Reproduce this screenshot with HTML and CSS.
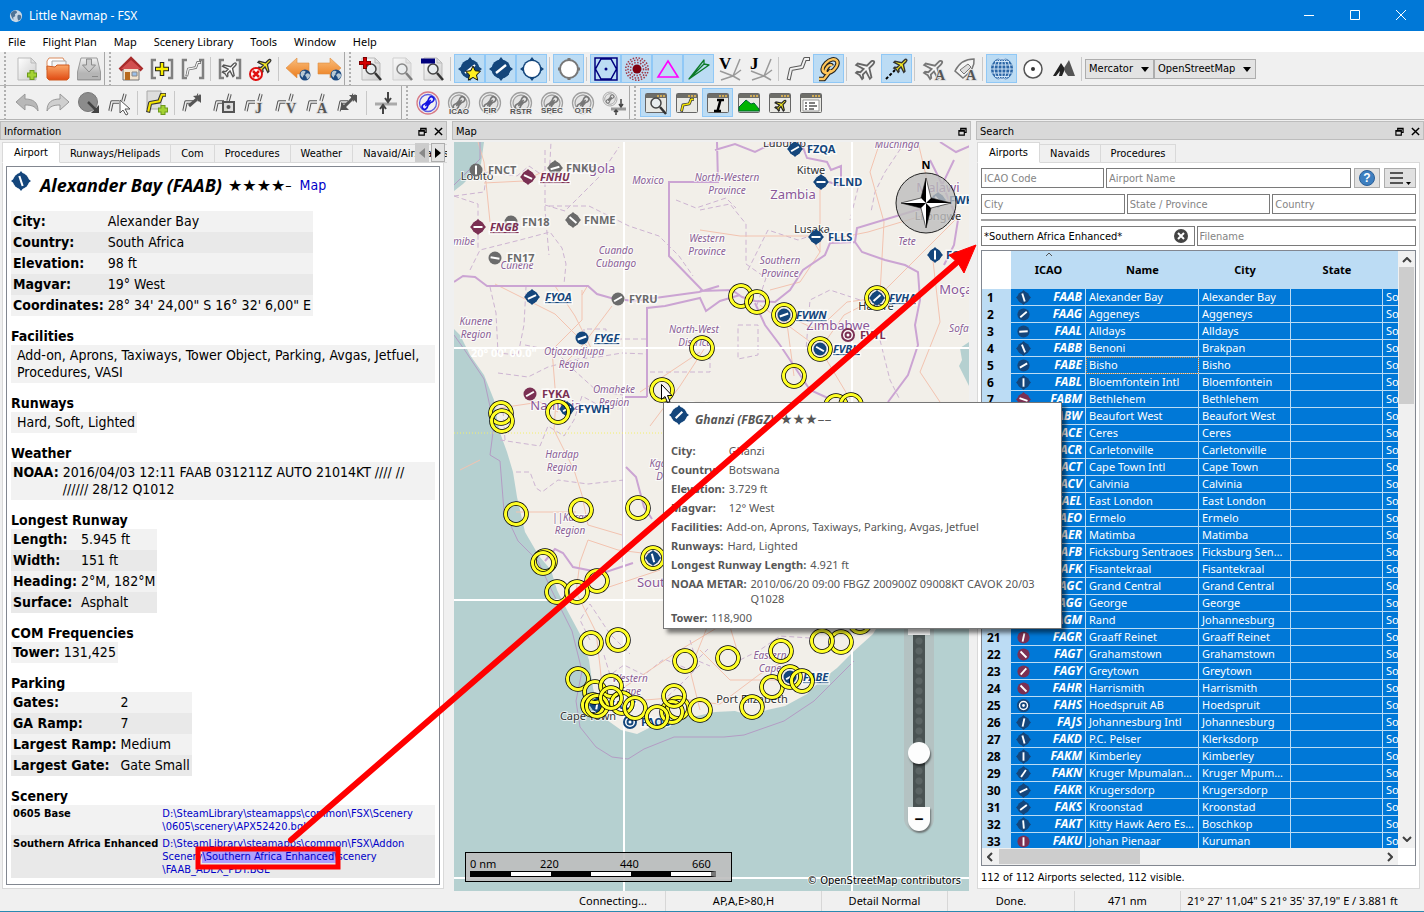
FILE: index.html
```html
<!DOCTYPE html>
<html lang="en">
<head>
    <meta charset="UTF-8">
    <meta name="viewport" content="width=device-width, initial-scale=1.0">
    <title>Little Navmap - FSX</title>
    <link rel="stylesheet" href="styles.css">
</head>
<body>
    <!-- Icon library -->
    <svg class="icon-defs" width="0" height="0" aria-hidden="true">
        <defs>
            <linearGradient id="gPaper" x1="0" y1="0" x2="1" y2="1"><stop offset="0" stop-color="#fff"/><stop offset="1" stop-color="#ccc"/></linearGradient>
            <linearGradient id="gOrange" x1="0" y1="0" x2="0" y2="1"><stop offset="0" stop-color="#f9bd7c"/><stop offset="1" stop-color="#ec7d1c"/></linearGradient>
            <linearGradient id="gFolder" x1="0" y1="0" x2="0" y2="1"><stop offset="0" stop-color="#fba868"/><stop offset="1" stop-color="#e04a12"/></linearGradient>
            <linearGradient id="gDisk" x1="0" y1="0" x2="0" y2="1"><stop offset="0" stop-color="#f2f2f2"/><stop offset="1" stop-color="#9a9a9a"/></linearGradient>
            <path id="planePath" d="M12 1c1.200 0 1.700 1.500 1.700 3v5l8 5v2.200l-8-2.500v4.500l2.600 2v1.600L12 20.800l-4.300 1v-1.600l2.600-2v-4.500l-8 2.500V14l8-5V4c0-1.500.5-3 1.700-3z"/>
            <path id="routePath" d="M3 21l2-9 11-2 3-8h3"/>
            <symbol id="route" viewBox="0 0 24 24"><g fill="none" stroke-linejoin="round" stroke-linecap="square"><use href="#routePath" stroke="#5a5a5a" stroke-width="4"/><use href="#routePath" stroke="#f2f2f2" stroke-width="2"/></g></symbol>
            <symbol id="routeYellow" viewBox="0 0 24 24"><g fill="none" stroke-linejoin="round" stroke-linecap="square"><use href="#routePath" stroke="#333" stroke-width="5"/><use href="#routePath" stroke="#f5e400" stroke-width="2.500"/></g></symbol>
            <symbol id="routeSmall" viewBox="0 0 24 24"><g fill="none" stroke-linejoin="round"><path d="M2 20l2-9h7M15 10l2-7" stroke="#555" stroke-width="3.500"/><path d="M2 20l2-9h7M15 10l2-7" stroke="#eee" stroke-width="1.500"/></g></symbol>
            <symbol id="brackets" viewBox="0 0 24 24"><path d="M6 3H2v18h4M18 3h4v18h-4" fill="none" stroke="#808080" stroke-width="2.500"/></symbol>
            <symbol id="magnifier" viewBox="0 0 24 24"><circle cx="12" cy="12" r="5" fill="#e8eef0" fill-opacity=".8" stroke="#444" stroke-width="1.500"/><path d="M16 16l6 7" stroke="#333" stroke-width="2.500"/></symbol>
            <symbol id="page" viewBox="0 0 24 24"><path d="M3 1h13l5 5v17H3z" fill="url(#gPaper)" stroke="#bbb"/><path d="M16 1l5 5h-5z" fill="#e0e0e0" stroke="#bbb"/></symbol>
            <symbol id="globe" viewBox="0 0 24 24"><circle cx="12" cy="12" r="11" fill="#1d4a80"/><path d="M4 6c4-4 8-3 9-1s-3 3-2 5-4 3-3 6-4-1-5-4zM14 10c3-3 7-1 8 2s-3 7-5 8-1-4-3-5-2-3 0-5z" fill="#b7c8d4"/></symbol>
            <symbol id="apt" viewBox="0 0 24 24"><circle cx="12" cy="12" r="9.500" fill="#14467c"/><path d="M12 0l3 4H9zM12 24l3-4H9zM0 12l4-3v6zM24 12l-4-3v6z" fill="#14467c"/></symbol>
            <g id="dumbbell" transform="rotate(-48 12 12)"><path d="M7 9.500c2 0 2.500 1 3.500 1h3c1 0 1.500-1 3.500-1a2.500 2.500 0 0 1 0 5c-2 0-2.500-1-3.500-1h-3c-1 0-1.500 1-3.500 1a2.500 2.500 0 0 1 0-5zM8 12h8" stroke-width="1.600"/></g>
            <symbol id="orbit" viewBox="0 0 24 24"><circle cx="12" cy="12" r="10.500" fill="none" stroke="#a0a0a0" stroke-width="1.300"/><circle cx="12" cy="12" r="8" fill="#e4e4e4" stroke="#a0a0a0" stroke-width="1.300"/><use href="#dumbbell" fill="#e4e4e4" stroke="#777"/></symbol>
            <symbol id="win" viewBox="0 0 24 24"><rect x="1.500" y="2.500" width="21" height="19" rx="1" fill="#e9e9e4" stroke="#666"/><path d="M2 3h20v4H2z" fill="#6d6d68"/><path d="M13 5h2M16 5h2M19 5h2" stroke="#f0c050" stroke-width="1.500"/></symbol>
            <symbol id="restore" viewBox="0 0 10 10"><path d="M3 4V1.500h6V6H7M1 4h6v5H1zM1 4.700h6M3 2h6" fill="none" stroke="#000" stroke-width="1.300"/></symbol>
            <symbol id="cross" viewBox="0 0 10 10"><path d="M1 1l8 8M9 1L1 9" stroke="#000" stroke-width="1.600"/></symbol>
            <g id="ring" fill="none"><circle r="10.500" stroke="#000" stroke-width="4.500"/><circle r="10.500" stroke="#ffff26" stroke-width="3"/></g>
            <symbol id="compassRose" viewBox="0 0 64 64">
                <circle cx="32" cy="32" r="30" fill="#bdbdbd" fill-opacity=".8" stroke="#222"/>
                <path d="M32 7l5 20 20 5-20 5-5 20-5-20-20-5 20-5z" fill="#fff" stroke="#000" stroke-width=".6"/>
                <path d="M32 7v25l-5-5zM57 32H32l5-5zM32 57V32l5 5zM7 32h25l-5 5z" fill="#000"/>
            </symbol>
        </defs>
    </svg>

    <header class="title-bar">
        <svg class="app-icon" viewBox="0 0 16 16"><circle cx="8" cy="8" r="7" fill="#c9d8e6"/><path d="M2 5c3-4 6-4 7-2s-3 2-2 4-3 1-2 4-3-2-3-6zM10 7c2-1 4 0 4 2s-2 4-3 4-2-5-1-6z" fill="#4e7396"/></svg>
        <h1>Little Navmap - FSX</h1>
        <div class="window-buttons">
            <button aria-label="Minimize"><svg viewBox="0 0 10 10"><path d="M0 5.500h10" stroke="#fff"/></svg></button>
            <button aria-label="Maximize"><svg viewBox="0 0 10 10"><path d="M.5.5h9v9h-9z" fill="none" stroke="#fff"/></svg></button>
            <button aria-label="Close"><svg viewBox="0 0 10 10"><path d="M0 0l10 10M10 0L0 10" stroke="#fff"/></svg></button>
        </div>
    </header>

    <nav class="menu-bar">
        <button>File</button>
        <button>Flight Plan</button>
        <button>Map</button>
        <button>Scenery Library</button>
        <button>Tools</button>
        <button>Window</button>
        <button>Help</button>
    </nav>

    <div class="toolbar">
        <span class="handle"></span>
        <button aria-label="New"><svg viewBox="0 0 24 24"><use href="#page"/><path d="M17 13v10M12 18h10" stroke="#6c9a1d" stroke-width="5"/><path d="M17 14v8M13 18h8" stroke="#a4d233" stroke-width="3"/></svg></button>
        <button aria-label="Open"><svg viewBox="0 0 24 24"><path d="M3 1h14l2 4v8H1V4z" fill="#fff" stroke="#d98a5c"/><path d="M6 4h14v8H6z" fill="#f5f5f5" stroke="#aaa"/><path d="M1 9l8 1 2-2h12v13l-2 2H3l-2-2z" fill="url(#gFolder)" stroke="#d05a20"/></svg></button>
        <button aria-label="Save"><svg viewBox="0 0 24 24"><path d="M4 1h16l3.500 14v8H.5v-8z" fill="url(#gDisk)" stroke="#999"/><path d="M1 16h22v6H1z" fill="#b5b5b5"/><path d="M9.500 2h5v6h4L12 15 5.500 8h4z" fill="#ccc" stroke="#8a8a8a"/><path d="M15 19.500h6" stroke="#888"/></svg></button>
        <span class="handle edge"></span>
        <button aria-label="Home"><svg viewBox="0 0 24 24"><path d="M4 11h16v12H4z" fill="#f1e4cf" stroke="#777"/><path d="M1 13L12 2l11 11" fill="none" stroke="#a82b2b" stroke-width="4"/><path d="M2 12L12 3l10 9z" fill="#d25050"/><path d="M6 15h5v8H6z" fill="#b86a1d"/><path d="M13 15h5v4h-5z" fill="#9cc0e8" stroke="#888"/></svg></button>
        <button aria-label="Center airport"><svg viewBox="0 0 24 24"><use href="#brackets"/><path d="M12 5v14M5 12h14" stroke="#222" stroke-width="4.500"/><path d="M12 6v12M6 12h12" stroke="#f8ee00" stroke-width="2.500"/></svg></button>
        <button aria-label="Center flight plan"><svg viewBox="0 0 24 24"><use href="#brackets"/><use href="#route" x="4" y="4" width="16" height="16"/></svg></button>
        <span class="separator"></span>
        <button aria-label="Center aircraft"><svg viewBox="0 0 24 24"><use href="#brackets"/><use href="#planePath" transform="rotate(45 12 12) translate(3 3) scale(.76)" fill="#fff" stroke="#555" stroke-width="1.800"/></svg></button>
        <button aria-label="Delete trail"><svg viewBox="0 0 24 24"><use href="#planePath" transform="translate(16 -4) rotate(45) scale(.72)" fill="#f5ea20" stroke="#333" stroke-width="1.800"/><circle cx="7" cy="17" r="6" fill="#fff" stroke="#e01010" stroke-width="2"/><path d="M4 14l6 6M10 14l-6 6" stroke="#e01010" stroke-width="2.500"/></svg></button>
        <span class="separator"></span>
        <button aria-label="Back"><svg viewBox="0 0 24 24"><path d="M0 11L11 1v5h12v11H11v4z" fill="url(#gOrange)" stroke="#dd8d42" stroke-width=".6"/><use href="#globe" x="13" y="12" width="12" height="12"/></svg></button>
        <button aria-label="Forward"><svg viewBox="0 0 24 24"><path d="M24 11L13 1v5H1v11h12v4z" fill="url(#gOrange)" stroke="#dd8d42" stroke-width=".6"/><use href="#globe" x="13" y="12" width="12" height="12"/></svg></button>
        <span class="handle edge"></span>
        <button aria-label="Increase detail"><svg viewBox="0 0 24 24"><use href="#page"/><use href="#magnifier"/><path d="M6 0v12M0 6h12" stroke="#700" stroke-width="4"/><path d="M6 1v10M1 6h10" stroke="#d40000" stroke-width="2.500"/></svg></button>
        <button aria-label="Default detail"><svg viewBox="0 0 24 24" class="faded"><use href="#page"/><use href="#magnifier"/></svg></button>
        <button aria-label="Decrease detail"><svg viewBox="0 0 24 24"><use href="#page"/><use href="#magnifier"/><path d="M0 4h14" stroke="#00007c" stroke-width="5"/></svg></button>
        <span class="separator"></span>
        <button class="checked" aria-label="Add-on airports"><svg viewBox="0 0 24 24"><use href="#apt"/><path d="M7 16L17 8" stroke="#fff" stroke-width="2"/><path d="M15 9l2.200 4.800 5.300.5-4 3.600 1.200 5.300-4.700-2.800-4.700 2.800 1.200-5.300-4-3.600 5.300-.5z" fill="#ffee20" stroke="#111"/></svg></button>
        <button class="checked" aria-label="Hard runways"><svg viewBox="0 0 24 24"><use href="#apt"/><path d="M7 16L17 8" stroke="#fff" stroke-width="2.500"/></svg></button>
        <button class="checked" aria-label="Soft runways"><svg viewBox="0 0 24 24"><use href="#apt"/><circle cx="12" cy="12" r="8" fill="#fff"/></svg></button>
        <span class="separator"></span>
        <button class="checked" aria-label="Empty airports"><svg viewBox="0 0 24 24"><path d="M12 1v22M1 12h22" stroke="#777" stroke-width="3"/><circle cx="12" cy="12" r="9" fill="#fff" stroke="#777" stroke-width="2"/></svg></button>
        <span class="separator"></span>
        <button class="checked" aria-label="VOR"><svg viewBox="0 0 24 24"><path d="M1 1h22v22H1zM7 2h10l5.500 10L17 22H7L1.500 12z" fill="none" stroke="#00007f" stroke-width="1.500"/><circle cx="12" cy="12" r="1.500" fill="#00007f"/></svg></button>
        <button class="checked" aria-label="NDB"><svg viewBox="0 0 24 24"><circle cx="12" cy="12" r="4.500" fill="#800010"/><g fill="none" stroke="#a03848" stroke-width="1.500" stroke-dasharray="1.500 1.500"><circle cx="12" cy="12" r="6.500"/><circle cx="12" cy="12" r="9"/><circle cx="12" cy="12" r="11.200"/></g></svg></button>
        <button class="checked" aria-label="Waypoints"><svg viewBox="0 0 24 24"><path d="M12 4l10 16H2z" fill="none" stroke="#f0f" stroke-width="1.600"/></svg></button>
        <button class="checked" aria-label="ILS"><svg viewBox="0 0 24 24"><path d="M2 22L17 3v4l5 1zL17 7" fill="none" stroke="#0c7a28" stroke-width="1.300" stroke-linejoin="round"/></svg></button>
        <button aria-label="Victor airways"><svg viewBox="0 0 24 24"><path d="M2 14l13 5M3 23l12-4M15 19L22 2M15 19l8-6M15 19l7 4" stroke="#999" stroke-width="1.500" fill="none"/><text x="1" y="12" class="glyph-serif">V</text></svg></button>
        <button aria-label="Jet airways"><svg viewBox="0 0 24 24"><path d="M2 14l13 5M3 23l12-4M15 19L22 2M15 19l8-6M15 19l7 4" stroke="#999" stroke-width="1.500" fill="none"/><text x="1" y="12" class="glyph-serif">J</text></svg></button>
        <span class="separator"></span>
        <button aria-label="Show flight plan"><svg viewBox="0 0 24 24"><use href="#route"/></svg></button>
        <button class="checked" aria-label="Show missed approach"><svg viewBox="0 0 24 24"><g fill="none" stroke-linejoin="round"><path d="M2 22h5l7-9M9 16c-5-1-4-6 0-10s9-5 11-2-2 9-6 11-7 1-5-3 5-5 6-3" stroke="#222" stroke-width="4.500"/><path d="M2 22h5l7-9M9 16c-5-1-4-6 0-10s9-5 11-2-2 9-6 11-7 1-5-3 5-5 6-3" stroke="#ffc65a" stroke-width="2.300"/></g></svg></button>
        <span class="separator"></span>
        <button aria-label="Show aircraft"><svg viewBox="0 0 24 24"><use href="#planePath" transform="rotate(45 12 12)" fill="#f4f4f4" stroke="#666" stroke-width="1.800"/></svg></button>
        <button class="checked" aria-label="Show trail"><svg viewBox="0 0 24 24"><use href="#planePath" transform="translate(16 -4) rotate(45) scale(.72)" fill="#f5ea20" stroke="#333" stroke-width="2"/><path d="M1 22l9-9" stroke="#000" stroke-width="2" stroke-dasharray="3 2"/></svg></button>
        <span class="separator"></span>
        <button aria-label="AI aircraft"><svg viewBox="0 0 24 24"><use href="#planePath" transform="rotate(45 12 12)" fill="#f4f4f4" stroke="#777" stroke-width="1.800"/><text x="13" y="23" class="glyph-letter">A</text></svg></button>
        <button aria-label="AI ships"><svg viewBox="0 0 24 24"><path d="M2 14c4-8 11-12 19-12 1 8-4 14-11 19z" fill="#f4f4f4" stroke="#777" stroke-width="1.500"/><path d="M7 13l4 4 7-7-3-3z" fill="#ddd" stroke="#777"/><text x="13" y="23" class="glyph-letter">A</text></svg></button>
        <span class="separator"></span>
        <button class="checked" aria-label="Grid"><svg viewBox="0 0 24 24"><circle cx="12" cy="12" r="11" fill="#2c66a6"/><g fill="none" stroke="#cfe4f7"><ellipse cx="12" cy="12" rx="4" ry="11"/><ellipse cx="12" cy="12" rx="8" ry="11"/><path d="M12 1v22M1 12h22M2 8h20M2 16h20M5 4.500h14M5 19.500h14"/></g></svg></button>
        <button aria-label="Cities"><svg viewBox="0 0 24 24"><circle cx="12" cy="12" r="9" fill="#fff" stroke="#555" stroke-width="1.500"/><circle cx="12" cy="12" r="2" fill="#333"/></svg></button>
        <button aria-label="Hillshading"><svg viewBox="0 0 24 24"><path d="M1 19L9 6l4 6-3 7h-3l1-5-4 5z" fill="#222"/><path d="M12 11l5-8 6 16h-7l-3-4z" fill="#555"/></svg></button>
        <span class="separator"></span>
        <label class="combo projection"><select aria-label="Projection"><option>Mercator</option><option>Spherical</option></select></label>
        <label class="combo theme"><select aria-label="Map theme"><option>OpenStreetMap</option><option>OpenTopoMap</option></select></label>
    </div>

    <div class="toolbar">
        <span class="handle"></span>
        <button aria-label="Undo"><svg viewBox="0 0 24 24"><path d="M1 11l9-8v5c8 0 13 3 13 12-3-5-7-6-13-6v5z" fill="#b8b8b8" stroke="#999"/></svg></button>
        <button aria-label="Redo"><svg viewBox="0 0 24 24"><path d="M23 11l-9-8v5C6 8 1 11 1 20c3-5 7-6 13-6v5z" fill="#cfcfcf" stroke="#999"/></svg></button>
        <button aria-label="Select"><svg viewBox="0 0 24 24"><circle cx="11" cy="11" r="9.500" fill="#8c8c8c" stroke="#777"/><path d="M11 11l9 9" stroke="#444" stroke-width="2.500"/><path d="M22 22v-8l-8 8z" fill="#444"/></svg></button>
        <button aria-label="Edit on map"><svg viewBox="0 0 24 24"><use href="#routeSmall"/><path d="M12 9l10 9h-5l3 5-2 1-3-5-3 3z" fill="#fff" stroke="#555"/></svg></button>
        <span class="separator"></span>
        <button aria-label="Procedures"><svg viewBox="0 0 24 24"><path d="M2 0h14v18H2z" fill="#ddd" stroke="#aaa"/><use href="#routeYellow" x="1" y="2" width="20" height="20"/><path d="M18 14v10M13 19h10" stroke="#6c9a1d" stroke-width="5"/><path d="M18 15v8M14 19h8" stroke="#a4d233" stroke-width="3"/></svg></button>
        <span class="separator"></span>
        <button aria-label="Direct"><svg viewBox="0 0 24 24"><use href="#routeSmall"/><path d="M7 15l8-7" stroke="#555" stroke-width="3"/><path d="M19 4v8l-8-7z" fill="#555"/></svg></button>
        <button aria-label="Radionav"><svg viewBox="0 0 24 24"><use href="#routeSmall"/><path d="M10 11h11v10H10z" fill="#ddd" stroke="#555" stroke-width="2"/><circle cx="15.500" cy="16" r="2" fill="#555"/></svg></button>
        <button aria-label="High altitude"><svg viewBox="0 0 24 24"><use href="#routeSmall"/><text x="11" y="22" class="glyph-letter">J</text></svg></button>
        <button aria-label="Low altitude"><svg viewBox="0 0 24 24"><use href="#routeSmall"/><text x="11" y="22" class="glyph-letter">V</text></svg></button>
        <button aria-label="By altitude"><svg viewBox="0 0 24 24"><use href="#routeSmall"/><text x="11" y="22" class="glyph-letter">A</text></svg></button>
        <button aria-label="Reverse"><svg viewBox="0 0 24 24"><use href="#routeSmall"/><path d="M7 16l9-9" stroke="#555" stroke-width="3"/><path d="M20 4v8l-8-8zM4 19v-8l8 8z" fill="#555"/></svg></button>
        <span class="separator"></span>
        <button aria-label="Adjust altitude"><svg viewBox="0 0 24 24"><path d="M1 13h22" stroke="#aaa" stroke-width="3"/><path d="M14 1v9M11 7l3 4 3-4M9 23v-8M6 18l3-4 3 4" fill="none" stroke="#444" stroke-width="2"/></svg></button>
        <span class="handle edge"></span>
        <button aria-label="Airspaces"><svg viewBox="0 0 24 24"><circle cx="12" cy="12" r="11" fill="none" stroke="#d77a86" stroke-width="1.300"/><circle cx="12" cy="12" r="8.500" fill="none" stroke="#5b5be0" stroke-width="1.300"/><use href="#dumbbell" fill="#e8e8ff" stroke="#1414e0"/></svg></button>
        <button aria-label="ICAO airspaces"><svg viewBox="0 0 24 24"><use href="#orbit"/><text x="12" y="23" class="glyph-tag">ICAO</text></svg></button>
        <button aria-label="FIR airspaces"><svg viewBox="0 0 24 24"><use href="#orbit"/><text x="12" y="22" class="glyph-tag">FIR</text></svg></button>
        <button aria-label="Restricted airspaces"><svg viewBox="0 0 24 24"><use href="#orbit"/><text x="12" y="23" class="glyph-tag">RSTR</text></svg></button>
        <button aria-label="Special airspaces"><svg viewBox="0 0 24 24"><use href="#orbit"/><text x="12" y="22" class="glyph-tag">SPEC</text></svg></button>
        <button aria-label="Other airspaces"><svg viewBox="0 0 24 24"><use href="#orbit"/><text x="12" y="22" class="glyph-tag">OTR</text></svg></button>
        <button aria-label="Airspace altitude"><svg viewBox="0 0 24 24"><use href="#orbit" width="16" height="16"/><path d="M9 18h15" stroke="#999" stroke-width="3"/><path d="M19 8v8M17 13l2 3 2-3M14 24v-5M12 21l2-2 2 2" fill="none" stroke="#444" stroke-width="1.500"/></svg></button>
        <span class="handle edge"></span>
        <button class="checked" aria-label="Search window"><svg viewBox="0 0 24 24"><use href="#win"/><use href="#magnifier"/></svg></button>
        <button aria-label="Flight plan window"><svg viewBox="0 0 24 24"><use href="#win"/><use href="#routeYellow" x="5" y="7" width="14" height="14"/></svg></button>
        <button class="checked" aria-label="Information window"><svg viewBox="0 0 24 24"><use href="#win"/><path d="M11 9h7M8 20h7M14.500 9l-3 11" stroke="#000" stroke-width="2.500"/></svg></button>
        <button aria-label="Elevation profile window"><svg viewBox="0 0 24 24"><use href="#win"/><path d="M2 20v-4l7-7 5 4 3-1 5 6v2z" fill="#00b400" stroke="#063"/></svg></button>
        <button aria-label="Aircraft window"><svg viewBox="0 0 24 24"><use href="#win"/><use href="#planePath" transform="translate(13 4) rotate(45) scale(.6)" fill="#f5ea20" stroke="#222" stroke-width="2"/></svg></button>
        <button aria-label="Legend window"><svg viewBox="0 0 24 24"><use href="#win"/><path d="M4 9h16v11H4z" fill="#fff" stroke="#999"/><path d="M6 12h2M6 15h2M6 18h2M10 12h6M10 15h8M10 18h5" stroke="#555" stroke-width="1.500"/></svg></button>
    </div>

    <main class="docks">
        <section class="dock">
            <div class="dock-title">
                <h2>Information</h2>
                <button aria-label="Float"><svg><use href="#restore"/></svg></button>
                <button aria-label="Close"><svg><use href="#cross"/></svg></button>
            </div>
            <div class="tabs info-tabs">
                <button class="active">Airport</button>
                <button>Runways/Helipads</button>
                <button>Com</button>
                <button>Procedures</button>
                <button>Weather</button>
                <button>Navaid/Airspaces</button>
                <div class="tab-scroll">
                    <button class="off" aria-label="Scroll left"><svg viewBox="0 0 6 10"><path d="M6 0v10L0 5z"/></svg></button>
                    <button aria-label="Scroll right"><svg viewBox="0 0 6 10"><path d="M0 0v10l6-5z"/></svg></button>
                </div>
            </div>
            <div class="pane info-pane">
                <article class="info-text">
                    <div class="info-head">
                        <svg class="info-icon" viewBox="0 0 24 24"><use href="#apt"/><path d="M10 6l4 12" stroke="#fff" stroke-width="2.500"/></svg>
                        <h3>Alexander Bay (FAAB)</h3>
                        <span class="stars">★★★★</span><span class="dash">–</span>
                        <a href="#map">Map</a>
                    </div>
                    <table class="facts">
                        <tr><th>City:</th><td>Alexander Bay</td></tr>
                        <tr><th>Country:</th><td>South Africa</td></tr>
                        <tr><th>Elevation:</th><td>98 ft</td></tr>
                        <tr><th>Magvar:</th><td>19° West</td></tr>
                        <tr><th>Coordinates:</th><td>28° 34' 24,00" S 16° 32' 6,00" E</td></tr>
                    </table>
                    <h4>Facilities</h4>
                    <table class="facts wide indent">
                        <tr><td>Add-on, Aprons, Taxiways, Tower Object, Parking, Avgas, Jetfuel, Procedures, VASI</td></tr>
                    </table>
                    <h4>Runways</h4>
                    <table class="facts indent">
                        <tr><td>Hard, Soft, Lighted</td></tr>
                    </table>
                    <h4>Weather</h4>
                    <table class="facts wide">
                        <tr><th>NOAA:</th><td>2016/04/03 12:11 FAAB 031211Z AUTO 21014KT //// //<br>////// 28/12 Q1012</td></tr>
                    </table>
                    <h4>Longest Runway</h4>
                    <table class="facts">
                        <tr><th>Length:</th><td>5.945 ft</td></tr>
                        <tr><th>Width:</th><td>151 ft</td></tr>
                        <tr><th>Heading:</th><td>2°M, 182°M</td></tr>
                        <tr><th>Surface:</th><td>Asphalt</td></tr>
                    </table>
                    <h4>COM Frequencies</h4>
                    <table class="facts">
                        <tr><th>Tower:</th><td>131,425</td></tr>
                    </table>
                    <h4>Parking</h4>
                    <table class="facts">
                        <tr><th>Gates:</th><td>2</td></tr>
                        <tr><th>GA Ramp:</th><td>7</td></tr>
                        <tr><th>Largest Ramp:</th><td>Medium</td></tr>
                        <tr><th>Largest Gate:</th><td>Gate Small</td></tr>
                    </table>
                    <h4>Scenery</h4>
                    <table class="facts wide scenery">
                        <tr><th>0605 Base</th><td><a href="#base">D:\SteamLibrary\steamapps\common\FSX\Scenery<br>\0605\scenery\APX52420.bgl</a></td></tr>
                        <tr><th>Southern Africa Enhanced</th><td><a href="#addon">D:\SteamLibrary\steamapps\common\FSX\Addon<br>Scenery<mark>\Southern Africa Enhanced\</mark>scenery<br>\FAAB_ADEX_PDT.BGL</a></td></tr>
                    </table>
                </article>
            </div>
        </section>

        <section class="dock map-dock">
            <div class="dock-title">
                <h2>Map</h2>
                <button aria-label="Float"><svg><use href="#restore"/></svg></button>
            </div>
            <div class="map">
                <svg class="map-canvas">
                    <g transform="translate(-454 -142)">
                        <rect class="land" x="0" y="0" width="3000" height="3000"/>
                        <path class="sea" d="M0 0H484V142l-3 22-10 12-8 8-9 7-4 134 10 10 10 20 14 20 10 25 5 30 8 22 6 20 4 25 8 35 14 24 12 14 6 20 10 20 14 26 8 24 4 28 4 16 10 16 14 10 16 4 12-6 12-14 16 2 20 0 18-4 20-1 16 5 16-6 18-4 22-12 12-12 18-14 16-16 20-18 30-50 40-55 60-60H3000V3000H0z"/>
                        <path class="sea" d="M969 342l-9 6 2 12-3 6 6 12 4 8h20v-44z"/>
                        <g class="region">
                            <path d="M454 196l30-4 3-20 30 4 12-10 20 14 2-38M545 150v60l4 45M545 205l20 6 14-14 20-20 20-30M549 206l40 0 20 10 20 10 30 10 20 20 14 20M470 270l10-20 40-10 30-8 12 16 4 16-2 20M490 287l6 26 2 40 20 2 6-30 2-38M454 196l24 8 0 46M525 345l30 6 20 20 22 20 26 4M498 373l30 4 20-10 30-8 20-2 24-4 25 1M584 342v-13h22v10h40M650 372h60v-20M676 200l20 8 30-10 10 10M700 210l30-6 16 20 0 40 20 14-10 30M748 270l20-40 30 10 30-10M860 180l-10 40M905 142l-20 30-10 20-4 20M860 300l-30-10-20 10-4 50M880 340l10 40 10 20M738 325h20v30l-20 4z"/>
                            <path d="M500 440l40 6 8-20 16 10 10-16 8-24 18 10 26-4M516 472h14l6 16 6 4 16-12 30 4 36-4M505 440l-2-30M590 640l-10-20 10-16 20 30 20 20M604 655l6 20 14-10 20 10 20-16 24 10 20-20M690 640l6 20 14 6M700 665l-20 20-26 24M740 660l20-10 20-14 30 2 12-10"/>
                        </g>
                        <g class="road">
                            <path d="M478 142l6 20 2 20 4 40M484 183l40-2 20-10M555 286l20 30 18 36-38-38-60-30M582 290v30l-30 30 4 50-2 30 20 40 8 25 6 30 34 10M588 285l-6 10M612 306l-30 40-20 20M500 408l40-6 18 10M516 512h60M588 540l-8 22-4 30 20 40 4 34 4 40M588 540l30 10 32 4M600 590l60-20M710 340l-30 46-30 40M480 460l-20 10"/>
                            <path d="M700 230l40 6 70 0 10 16 0-70M820 252l-20 30-30 8M828 240l40-8 60-18 0-30-10-42M877 298l-30 4-30 28-34-16M877 298l40-40 40-40M820 349l30 50M820 349l24-34 33-17M820 349l-60-44M794 376l-4-30-4-30M700 352l-60 40M940 402l-20-30 20-50-8-70M700 710l-10-40 20-50M680 700l40 4 40-30 30-16M740 660l-12-40M620 702l50-4 40 4M620 690l60-40 50-30M700 650l30 30 60 0M880 142l-10 30 14 50-4 72"/>
                        </g>
                        <g class="border">
                            <path d="M454 282l9-6 12 1 12 9h101l9 8 14 4 22 3 66-9 20-6M717 142l1 40h-49v74l34 35M647 397V308l18-2 35-8 6 13 14-10 20-6M700 291l32-1 10 7 13 4 20 1 15-12 13-20 22-15 5-12 25-1 7 10 23 8 20 5 13 7 2 28-5 25 3 20-10 30-20 27M755 303l10 22 15 20 10 15 10 15 10 15 20 9M647 397h-23M715 150l20-6 20 8 20-10 26 0 6 16 20 4 4 8 10-4v20l-12-4M855 242l2-14 53-16 22-6 22-46M930 160l10 20 18 40-4 25-10 20M940 142l16 10 14-6"/>
                            <path d="M626 467l10 10 8 30 8 12M545 561l10-12 8 4 10 14 30 6 30-10"/>
                            <path class="thin" d="M623 397v165M454 185l26-26V142M454 335l10 14 20 30 10 46-4 30 10 6 4 50 14 30 20 20 14 30 20 40 10 40-6 30 4 26 16 20 16 10 16 2 16-10 30-12 50 0 20-2 40-14 30-20 40-40"/>
                        </g>
                        <path class="graticule" d="M624 142V3000M852 142V3000M454 348H3000M454 600H3000M454 878H3000"/>
                        <path class="tropic" d="M454 433H3000"/>
                        <text class="grat-label" x="471" y="357">20° 00' 00.0"</text>
                        <g class="lbl-region">
                            <text x="648" y="184">Moxico</text>
                            <text x="727" y="181">North-Western</text><text x="727" y="194">Province</text>
                            <text x="707" y="242">Western</text><text x="707" y="255">Province</text>
                            <text x="616" y="254">Cuando</text><text x="616" y="267">Cubango</text>
                            <text x="517" y="269">Cunene</text>
                            <text x="464" y="245">mibe</text>
                            <text x="476" y="325">Kunene</text><text x="476" y="338">Region</text>
                            <text x="574" y="355">Otjozondjupa</text><text x="574" y="368">Region</text>
                            <text x="614" y="393">Omaheke</text><text x="614" y="406">Region</text>
                            <text x="694" y="333">North-West</text><text x="694" y="346">District</text>
                            <text x="780" y="264">Southern</text><text x="780" y="277">Province</text>
                            <text x="897" y="148">Muchinga</text>
                            <text x="907" y="245">Tete</text>
                            <text x="963" y="332">Sofala</text>
                            <text x="562" y="458">Hardap</text><text x="562" y="471">Region</text>
                            <text x="570" y="521">||Karas</text><text x="570" y="534">Region</text>
                            <text x="672" y="467">Kgalagadi</text><text x="672" y="480">District</text>
                            <text x="630" y="682">Western</text><text x="630" y="695">Cape</text>
                            <text x="770" y="659">Eastern</text><text x="770" y="672">Cape</text>
                        </g>
                        <g class="lbl-country">
                            <text x="594" y="173">Angola</text>
                            <text x="793" y="199">Zambia</text>
                            <text x="838" y="330">Zimbabwe</text>
                            <text x="938" y="192">Malawi</text>
                            <text x="962" y="294">Moçam</text>
                            <text x="556" y="410">Namibia</text>
                            <text x="718" y="411">Botswana</text>
                            <text x="674" y="587">South Africa</text>
                        </g>
                        <g class="lbl-city">
                            <text x="477" y="180">Lobito</text>
                            <text x="786" y="147">Lubumb.</text>
                            <text x="811" y="174">Kitwe</text>
                            <text x="812" y="233">Lusaka</text>
                            <text x="938" y="220">Lilongwe</text>
                            <text x="876" y="310">Harare</text>
                            <text x="588" y="720">Cape Town</text>
                            <text x="752" y="703">Port Elizabeth</text>
                        </g>
                        <g id="mapAirports"></g>
                        <g id="mapRings"></g>
                        <text class="attribution" x="884" y="884">© OpenStreetMap contributors</text>
                    </g>
                </svg>
                <div class="compass">
                    <span>N</span>
                    <svg viewBox="0 0 64 64"><use href="#compassRose"/></svg>
                </div>
                <div class="zoom-bar">
                    <button class="zoom-in" aria-label="Zoom in">+</button>
                    <input type="range" min="0" max="100" value="29" aria-label="Zoom">
                    <button class="zoom-out" aria-label="Zoom out">−</button>
                </div>
                <div class="scale">
                    <div class="scale-labels"><span>0 nm</span><span>220</span><span>440</span><span>660</span></div>
                    <div class="scale-line"><i></i><i></i><i></i><i></i><i></i><i></i></div>
                </div>
                <div class="tooltip">
                    <div class="tooltip-head">
                        <svg viewBox="0 0 24 24"><use href="#apt"/><path d="M8 16l8-8" stroke="#fff" stroke-width="2.500"/></svg>
                        <h3>Ghanzi (FBGZ)</h3><span>★★★––</span>
                    </div>
                    <table>
                        <tr><th>City:</th><td>Ghanzi</td></tr>
                        <tr><th>Country:</th><td>Botswana</td></tr>
                        <tr><th>Elevation:</th><td>3.729 ft</td></tr>
                        <tr><th>Magvar:</th><td>12° West</td></tr>
                    </table>
                    <table><tr><th>Facilities:</th><td>Add-on, Aprons, Taxiways, Parking, Avgas, Jetfuel</td></tr></table>
                    <table><tr><th>Runways:</th><td>Hard, Lighted</td></tr></table>
                    <table><tr><th>Longest Runway Length:</th><td>4.921 ft</td></tr></table>
                    <table><tr><th>NOAA METAR:</th><td>2010/06/20 09:00 FBGZ 200900Z 09008KT CAVOK 20/03 Q1028</td></tr></table>
                    <table><tr><th>Tower:</th><td>118,900</td></tr></table>
                </div>
                <svg class="cursor" viewBox="0 0 12 19"><path d="M.5.5v15l3.500-3 2.500 6 2.500-1-2.500-6H11z" fill="#fff" stroke="#000"/></svg>
            </div>
        </section>

        <section class="dock">
            <div class="dock-title">
                <h2>Search</h2>
                <button aria-label="Float"><svg><use href="#restore"/></svg></button>
                <button aria-label="Close"><svg><use href="#cross"/></svg></button>
            </div>
            <div class="tabs search-tabs">
                <button class="active">Airports</button>
                <button>Navaids</button>
                <button>Procedures</button>
            </div>
            <div class="pane search-pane">
                <div class="fields top-fields">
                    <input type="text" placeholder="ICAO Code" aria-label="ICAO Code">
                    <input type="text" placeholder="Airport Name" aria-label="Airport Name">
                    <button aria-label="Help"><svg viewBox="0 0 16 16"><circle cx="8" cy="8" r="7.500" fill="#3d7fc0" stroke="#2a5f98"/><text x="8" y="12" class="glyph-help">?</text></svg></button>
                    <button aria-label="Menu"><svg viewBox="0 0 24 16"><path d="M2 3h13M2 8h13M2 13h13" stroke="#555" stroke-width="2"/><path d="M18 12h5l-2.500 3z" fill="#000"/></svg></button>
                </div>
                <div class="fields">
                    <input type="text" placeholder="City" aria-label="City">
                    <input type="text" placeholder="State / Province" aria-label="State or province">
                    <input type="text" placeholder="Country" aria-label="Country">
                </div>
                <hr>
                <div class="fields">
                    <div class="clearable">
                        <input type="text" value="*Southern Africa Enhanced*" aria-label="Scenery path">
                        <button aria-label="Clear"><svg viewBox="0 0 14 14"><circle cx="7" cy="7" r="7" fill="#444"/><path d="M4 4l6 6M10 4l-6 6" stroke="#fff" stroke-width="2"/></svg></button>
                    </div>
                    <input type="text" placeholder="Filename" aria-label="Filename">
                </div>
                <div class="results">
                    <div class="results-view">
                        <table>
                            <colgroup><col class="c-num"><col class="c-icao"><col class="c-name"><col class="c-city"><col class="c-city"><col></colgroup>
                            <thead><tr><th></th><th class="sorted"><svg viewBox="0 0 8 5"><path d="M1 4l3-3 3 3" fill="none" stroke="#555"/></svg>ICAO</th><th>Name</th><th>City</th><th>State</th><th></th></tr></thead>
                            <tbody id="airportRows"></tbody>
                        </table>
                    </div>
                    <div class="scroll-v">
                        <svg viewBox="0 0 10 6"><path d="M1 5l4-4 4 4"/></svg>
                        <span></span>
                        <svg viewBox="0 0 10 6"><path d="M1 1l4 4 4-4"/></svg>
                    </div>
                    <div class="scroll-h">
                        <svg viewBox="0 0 6 10"><path d="M5 1L1 5l4 4"/></svg>
                        <span></span>
                        <svg viewBox="0 0 6 10"><path d="M1 1l4 4-4 4"/></svg>
                    </div>
                </div>
                <p class="summary">112 of 112 Airports selected, 112 visible.</p>
            </div>
        </section>
    </main>

    <footer class="status-bar">
        <span class="st-connect">Connecting...</span>
        <span class="st-features">AP,A,E&gt;80,H</span>
        <span class="st-detail">Detail Normal</span>
        <span class="st-render">Done.</span>
        <span class="st-distance">471 nm</span>
        <span class="st-position">21° 27' 11,04" S 21° 35' 37,19" E / 3.881 ft</span>
    </footer>

    <!-- Annotation drawn over the window -->
    <svg class="annotation" aria-hidden="true">
        <rect x="198" y="849" width="140" height="18"/>
        <path class="shaft" d="M291 840L962 258"/>
        <path class="head" d="M976 245l-12 28-6-10-9-8z"/>
    </svg>

    <script src="script.js"></script>
</body>
</html>
```
FILE: styles.css
```css
* {
    box-sizing: border-box;
}
body {
    margin: 0;
    height: 100vh;
    display: flex;
    flex-direction: column;
    position: relative;
    overflow: hidden;
    background: #f0f0f0;
    border-bottom: 1px solid #2a88b0;
    font-family: "Noto Sans", "Open Sans", sans-serif;
    font-size: 11px;
    color: #000;
}
h1, h2, h3, h4, p {
    margin: 0;
    font-weight: normal;
}
button, input, select {
    font: inherit;
    color: inherit;
    margin: 0;
    padding: 0;
}
button {
    border: none;
    background: none;
}
table {
    border-collapse: collapse;
}
.icon-defs {
    position: absolute;
}

/* Title and menu */
.title-bar {
    display: flex;
    align-items: center;
    flex: none;
    height: 31px;
    padding-left: 9px;
    background: #0078d7;
    color: #fff;
}
.app-icon {
    width: 14px;
    height: 14px;
}
.title-bar h1 {
    flex: 1;
    margin-left: 6px;
    font-size: 12px;
}
.window-buttons {
    display: flex;
}
.window-buttons button {
    width: 46px;
    height: 30px;
}
.window-buttons svg {
    width: 10px;
    height: 10px;
}
.menu-bar {
    display: flex;
    flex: none;
    height: 21px;
    background: #fff;
}
.menu-bar button {
    padding: 0 9px 0 8px;
}

/* Toolbars */
.toolbar {
    display: flex;
    align-items: center;
    flex: none;
    height: 34px;
    border-bottom: 1px solid #b4b4b4;
}
.toolbar button {
    display: flex;
    align-items: center;
    justify-content: center;
    flex: none;
    width: 31px;
    height: 29px;
}
.toolbar button.checked {
    background: #bcdcf4;
    border: 1px solid #90c8f6;
}
.toolbar svg {
    flex: none;
    width: 24px;
    height: 24px;
    overflow: visible;
}
.handle {
    flex: none;
    width: 11px;
    height: 100%;
    background: radial-gradient(circle, #b0b0b0 1px, transparent 1px) 3px 3px / 4px 4px repeat-y;
}
.handle.edge {
    border-left: 1px solid #a8a8a8;
}
.separator {
    flex: none;
    width: 6px;
    height: 24px;
    background: linear-gradient(#c8c8c8, #c8c8c8) 2px 0 / 1px 100% no-repeat;
}
.faded {
    opacity: 0.6;
}
.glyph-serif {
    font: bold 17px "Liberation Serif", serif;
}
.glyph-letter {
    font: bold 14px "Liberation Serif", serif;
    fill: #555;
    stroke: #ddd;
    stroke-width: 2px;
    paint-order: stroke;
}
.glyph-tag {
    font: bold 8px "Liberation Sans", sans-serif;
    text-anchor: middle;
    fill: #555;
    stroke: #eee;
    stroke-width: 2px;
    paint-order: stroke;
}
.glyph-help {
    font: bold 12px "Liberation Sans", sans-serif;
    text-anchor: middle;
    fill: #fff;
}
.combo {
    position: relative;
    height: 20px;
}
.combo select {
    appearance: none;
    width: 100%;
    height: 100%;
    padding-left: 3px;
    border: 1px solid #adadad;
    border-radius: 0;
    background: #e3e3e3;
    font-family: "DejaVu Sans Condensed", "Noto Sans", sans-serif;
    font-size: 11px;
}
.combo::after {
    content: "";
    position: absolute;
    right: 5px;
    top: 8px;
    border: 4px solid transparent;
    border-top: 5px solid #000;
    pointer-events: none;
}
.projection {
    width: 69px;
}
.theme {
    width: 102px;
}

/* Docks */
.docks {
    display: grid;
    grid-template-columns: 447px minmax(0, 1fr) 448px;
    gap: 5px;
    flex: 1;
    min-height: 0;
    padding-top: 1px;
}
.dock {
    display: flex;
    flex-direction: column;
    min-width: 0;
    min-height: 0;
}
.dock-title {
    display: flex;
    align-items: center;
    flex: none;
    height: 19px;
    padding: 1px 0 0 3px;
    border: 1px solid #bdbdbd;
    background: #d9d9d9;
    font-family: "DejaVu Sans Condensed", "Noto Sans", sans-serif;
}
.dock-title h2 {
    flex: 1;
    font-size: 11px;
}
.dock-title button {
    width: 16px;
    height: 16px;
    line-height: 0;
}
.dock-title svg {
    width: 9px;
    height: 9px;
}
.tabs {
    display: flex;
    align-items: flex-end;
    flex: none;
    height: 23px;
    padding-left: 2px;
    position: relative;
    z-index: 1;
    overflow: hidden;
    font-family: "DejaVu Sans Condensed", "Noto Sans", sans-serif;
}
.tabs > button {
    flex: none;
    height: 19px;
    border: 1px solid #d9d9d9;
    border-left: none;
    background: #f0f0f0;
    padding: 0 10px;
}
.tabs > button.active {
    height: 21px;
    padding: 0 11px;
    border-left: 1px solid #d9d9d9;
    border-bottom-color: #fff;
    background: #fff;
}
.search-tabs {
    padding-left: 1px;
}
.tab-scroll {
    position: absolute;
    right: 2px;
    bottom: 1px;
    display: flex;
    gap: 2px;
}
.tab-scroll button {
    width: 14px;
    height: 19px;
    line-height: 0;
    border: 1px solid #adadad;
    background: #e3e3e3;
}
.tab-scroll button.off {
    border-color: #ccc;
    background: #ccc;
    fill: #888;
}
.tab-scroll svg {
    width: 6px;
    height: 10px;
}
.pane {
    flex: 1;
    min-height: 0;
    margin-top: -1px;
    background: #fff;
    border: 1px solid #d9d9d9;
}
.info-pane {
    margin: -1px 3px 2px 2px;
    padding: 3px;
}

/* Airport information */
.info-text {
    height: 100%;
    padding: 4px;
    overflow: hidden;
    border: 1px solid #828790;
    font-family: "DejaVu Sans Condensed", "Noto Sans", sans-serif;
    font-size: 14px;
    line-height: 17px;
}
.info-head {
    display: flex;
    align-items: center;
    height: 28px;
    margin-bottom: 12px;
}
.info-icon {
    width: 20px;
    height: 20px;
    align-self: flex-start;
}
.info-head h3 {
    margin: 0 6px 0 9px;
    font-family: "Noto Sans", "Open Sans", sans-serif;
    font-size: 18px;
    font-weight: bold;
    font-style: italic;
}
.stars {
    font-family: "DejaVu Sans", sans-serif;
    font-size: 16px;
}
.info-head a {
    margin-left: 8px;
}
.info-text a {
    color: #0000c8;
    text-decoration: none;
}
.facts {
    margin-bottom: 12px;
}
.facts.wide {
    width: 100%;
}
.facts tr {
    background: #f2f2f2;
}
.facts tr:nth-child(even) {
    background: #e9e9e9;
}
.facts th, .facts td {
    padding: 2px;
    text-align: left;
    vertical-align: top;
    white-space: nowrap;
}
.facts.wide td {
    width: 100%;
    white-space: normal;
}
.facts.indent td {
    padding-left: 6px;
}
.info-text h4 {
    font-weight: bold;
    font-size: 14px;
}
.facts.scenery {
    font-size: 11px;
    line-height: 13px;
    margin-bottom: 0;
}
.scenery mark {
    background: #b0a0ff;
    color: inherit;
}

/* Map */
.map {
    position: relative;
    flex: 1;
    min-height: 0;
    margin: 2px 2px 0;
}
.map-canvas {
    position: absolute;
    width: 100%;
    height: 100%;
    overflow: hidden;
}
.land {
    fill: #f2efe9;
}
.sea {
    fill: #b5d0d0;
}
.region path {
    fill: none;
    stroke: #cdb4d2;
    stroke-dasharray: 5 3;
}
.road path {
    fill: none;
    stroke: #f3c3b0;
}
.border path {
    fill: none;
    stroke: #cba4d3;
    stroke-width: 2px;
}
.border .thin {
    stroke: #b39cc4;
    stroke-width: 1px;
}
.graticule {
    stroke: #fff;
    stroke-width: 2px;
}
.tropic {
    stroke: #f4f06a;
    stroke-dasharray: 1 2;
}
.grat-label {
    font-weight: bold;
    font-size: 11px;
    fill: #fff;
}
.lbl-region {
    font-size: 10px;
    font-style: italic;
    text-anchor: middle;
    fill: #8a6096;
}
.lbl-country {
    font-size: 13px;
    text-anchor: middle;
    fill: #8a5799;
}
.lbl-city {
    font-size: 11px;
    text-anchor: middle;
    fill: #333;
}
.lbl-region text, .lbl-country text, .lbl-city text, .attribution {
    stroke: #fff;
    stroke-opacity: 0.7;
    stroke-width: 2px;
    paint-order: stroke;
}
.attribution {
    font-family: "DejaVu Sans Condensed", "Noto Sans", sans-serif;
    font-size: 11px;
    text-anchor: middle;
}
.map-ident {
    font-size: 11px;
    font-weight: bold;
    stroke: #fff;
    stroke-opacity: 0.7;
    stroke-width: 3px;
    paint-order: stroke;
}
.map-ident.addon {
    font-style: italic;
    text-decoration: underline;
}
.compass {
    position: absolute;
    right: 11px;
    top: 17px;
    width: 64px;
    text-align: center;
    font-weight: bold;
    line-height: 12px;
}
.compass svg {
    display: block;
    width: 64px;
    height: 64px;
}
.zoom-bar {
    position: absolute;
    right: 35px;
    bottom: 58px;
    width: 30px;
    display: flex;
    flex-direction: column;
    align-items: center;
    padding: 2px 0;
    border-radius: 15px;
    background: rgba(180, 180, 180, 0.5);
}
.zoom-bar button {
    width: 22px;
    height: 24px;
    background: #fdfdfd;
    font-size: 16px;
    font-weight: bold;
    line-height: 20px;
}
.zoom-in {
    border-radius: 11px 11px 0 0;
}
.zoom-out {
    border-radius: 0 0 11px 11px;
    box-shadow: 1px 2px 2px rgba(0, 0, 0, 0.4);
}
.zoom-bar input {
    appearance: none;
    writing-mode: vertical-lr;
    direction: rtl;
    width: 22px;
    height: 172px;
    background: radial-gradient(circle, #5b6464 3px, transparent 4px) center / 12px 10px repeat-y,
        linear-gradient(#4a5353, #4a5353) center / 12px 100% no-repeat;
}
.zoom-bar input::-webkit-slider-thumb {
    appearance: none;
    width: 22px;
    height: 22px;
    border-radius: 50%;
    background: #fdfdfd;
    box-shadow: 1px 2px 2px rgba(0, 0, 0, 0.5);
}
.scale {
    position: absolute;
    left: 11px;
    bottom: 9px;
    width: 267px;
    height: 30px;
    padding: 4px 15px 0 4px;
    border: 1px solid #000;
    background: rgba(190, 190, 190, 0.9);
}
.scale-labels {
    display: grid;
    grid-template-columns: 70px 80px 72px auto;
    line-height: 14px;
}
.scale-line {
    display: flex;
    height: 6px;
    border: 1px solid #000;
    border-right: 5px solid #777;
}
.scale-line i {
    flex: 1;
    background: #000;
}
.scale-line i:nth-child(even) {
    background: #fff;
}
.tooltip {
    position: absolute;
    left: 209px;
    top: 260px;
    z-index: 2;
    width: 399px;
    height: 227px;
    padding: 2px 5px;
    border: 1px solid #767676;
    background: #fff;
    box-shadow: 4px 4px 4px rgba(0, 0, 0, 0.5);
    color: #575757;
    line-height: 15px;
}
.tooltip-head {
    display: flex;
    align-items: center;
    height: 29px;
    margin-bottom: 7px;
}
.tooltip-head svg {
    width: 20px;
    height: 20px;
    align-self: flex-start;
}
.tooltip-head h3 {
    margin: 0 6px;
    font-size: 12px;
    font-weight: bold;
    font-style: italic;
}
.tooltip-head span {
    font-family: "DejaVu Sans", sans-serif;
    font-size: 14px;
}
.tooltip th, .tooltip td {
    padding: 2px;
    text-align: left;
    vertical-align: top;
}
.tooltip th {
    white-space: nowrap;
}
.cursor {
    position: absolute;
    left: 207px;
    top: 242px;
    z-index: 3;
    width: 12px;
    height: 19px;
}

/* Search */
.search-pane {
    display: flex;
    flex-direction: column;
    margin: -1px 4px 2px 1px;
    padding: 5px 3px 2px;
}
.fields {
    display: flex;
    gap: 2px;
    height: 20px;
    flex: none;
    margin-bottom: 6px;
    font-family: "DejaVu Sans Condensed", "Noto Sans", sans-serif;
}
.fields > * {
    flex: 1;
    min-width: 0;
}
.fields input {
    border: 1px solid #7a7a7a;
    background: #fff;
    padding: 0 2px;
}
.fields input::placeholder {
    color: #848484;
}
.top-fields input:first-child {
    flex: 120 1 0;
}
.top-fields input:nth-child(2) {
    flex: 245 1 0;
}
.top-fields button {
    flex: 0 0 26px;
    margin-left: 1px;
    border: 1px solid #adadad;
    background: #e1e1e1;
    line-height: 0;
}
.top-fields button:last-child {
    flex-basis: 32px;
    margin-left: 2px;
}
.top-fields svg {
    height: 16px;
}
.search-pane hr {
    width: 100%;
    height: 2px;
    flex: none;
    margin: -1px 0 5px;
    border: none;
    background: #a0a0a0;
}
.clearable {
    position: relative;
}
.clearable input {
    width: 100%;
    height: 100%;
}
.clearable button {
    position: absolute;
    right: 7px;
    top: 3px;
    line-height: 0;
}
.clearable svg {
    width: 14px;
    height: 14px;
}
.results {
    display: grid;
    grid-template-columns: minmax(0, 1fr) 17px;
    grid-template-rows: minmax(0, 1fr) 17px;
    flex: 1;
    min-height: 0;
    margin-top: -2px;
    border: 1px solid #828790;
}
.results-view {
    overflow: hidden;
}
.results table {
    width: 100%;
    table-layout: fixed;
    border-collapse: separate;
    border-spacing: 0;
    line-height: 16px;
}
.c-num {
    width: 29px;
}
.c-icao {
    width: 75px;
}
.c-name {
    width: 113px;
}
.c-city {
    width: 92px;
}
.results th, .results td {
    padding: 0;
    overflow: hidden;
    white-space: nowrap;
}
.results thead th {
    height: 38px;
    background: #bcdcf4;
    font-weight: bold;
}
.results thead th:first-child {
    background: #fff;
}
.sorted svg {
    display: block;
    width: 8px;
    height: 5px;
    margin: -5px auto 5px;
}
.results thead th.sorted {
    padding-bottom: 5px;
}
.results tbody th {
    padding-left: 5px;
    background: #bcdcf4;
    text-align: left;
    font-size: 12px;
    font-weight: bold;
}
.results tbody td {
    height: 17px;
    padding: 0 4px 0 3px;
    border-right: 1px solid #bcdcf4;
    border-bottom: 1px solid #bcdcf4;
    background: #0078d7;
    color: #fff;
    text-overflow: ellipsis;
}
.results tbody td:last-child {
    padding-right: 0;
    border-right: none;
    text-overflow: clip;
}
.results tbody td.ident {
    padding: 0 3px 0 5px;
}
.ident div {
    display: flex;
    justify-content: space-between;
    align-items: center;
    height: 16px;
    font-size: 12px;
    font-weight: bold;
    font-style: italic;
}
.ident svg {
    width: 15px;
    height: 15px;
}
.results td.current {
    outline: 1px dotted #d08a40;
    outline-offset: -1px;
}
.scroll-v, .scroll-h {
    display: flex;
    align-items: center;
    background: #f0f0f0;
}
.scroll-v {
    flex-direction: column;
    padding: 6px 0;
}
.scroll-h {
    padding: 0 5px;
}
.scroll-v span {
    width: 15px;
    height: 137px;
    margin: 4px 0 auto;
    background: #cdcdcd;
}
.scroll-h span {
    width: 141px;
    height: 15px;
    margin: 0 auto 0 6px;
    background: #cdcdcd;
}
.scroll-v svg {
    width: 10px;
    height: 6px;
}
.scroll-h svg {
    width: 6px;
    height: 10px;
}
.scroll-v path, .scroll-h path {
    fill: none;
    stroke: #404040;
    stroke-width: 2px;
}
.summary {
    flex: none;
    height: 20px;
    line-height: 24px;
    font-family: "DejaVu Sans Condensed", "Noto Sans", sans-serif;
}

/* Status bar */
.status-bar {
    display: flex;
    justify-content: flex-end;
    flex: none;
    height: 20px;
    padding-right: 20px;
    line-height: 20px;
}
.status-bar span {
    text-align: center;
    white-space: nowrap;
    border-left: 1px solid #d7d7d7;
}
.status-bar .st-connect {
    width: 104px;
    border-left: none;
}
.st-features {
    width: 156px;
}
.st-detail {
    width: 126px;
}
.st-render {
    width: 127px;
}
.st-distance {
    width: 106px;
}
.st-position {
    width: 224px;
}

.annotation {
    position: absolute;
    left: 0;
    top: 0;
    z-index: 5;
    width: 100%;
    height: 100%;
    pointer-events: none;
}
.annotation rect {
    fill: none;
    stroke: #f00;
    stroke-width: 5px;
}
.annotation .shaft {
    stroke: #f00;
    stroke-width: 6px;
    stroke-linecap: round;
}
.annotation .head {
    fill: #f00;
    stroke: #f00;
}
```
FILE: script.js
```js
const NAVY = '#14467c';
const MAROON = '#7b3053';
const GRAY = '#6b6b6b';

// ident, name, city, colour, shape, runway angle
const airports = [
    ['FAAB', 'Alexander Bay', 'Alexander Bay', NAVY, 'd', -17],
    ['FAAG', 'Aggeneys', 'Aggeneys', NAVY, 'c', 50],
    ['FAAL', 'Alldays', 'Alldays', NAVY, 'c', 86],
    ['FABB', 'Benoni', 'Brakpan', NAVY, 'd', -22],
    ['FABE', 'Bisho', 'Bisho', NAVY, 'c', 60],
    ['FABL', 'Bloemfontein Intl', 'Bloemfontein', NAVY, 'd', 0],
    ['FABM', 'Bethlehem', 'Bethlehem', MAROON, 'd', -70],
    ['FABW', 'Beaufort West', 'Beaufort West', NAVY, 'c', 80],
    ['FACE', 'Ceres', 'Ceres', NAVY, 'c', 20],
    ['FACR', 'Carletonville', 'Carletonville', NAVY, 'c', -20],
    ['FACT', 'Cape Town Intl', 'Cape Town', NAVY, 'd', 10],
    ['FACV', 'Calvinia', 'Calvinia', NAVY, 'c', 30],
    ['FAEL', 'East London', 'East London', NAVY, 'd', -70],
    ['FAEO', 'Ermelo', 'Ermelo', NAVY, 'c', -45],
    ['FAER', 'Matimba', 'Matimba', NAVY, 'c', 40],
    ['FAFB', 'Ficksburg Sentraoes', 'Ficksburg Sentraoes', NAVY, 'c', 0],
    ['FAFK', 'Fisantekraal', 'Fisantekraal', NAVY, 'c', 50],
    ['FAGC', 'Grand Central', 'Grand Central', NAVY, 'c', 0],
    ['FAGG', 'George', 'George', NAVY, 'd', -70],
    ['FAGM', 'Rand', 'Johannesburg', NAVY, 'd', 0],
    ['FAGR', 'Graaff Reinet', 'Graaff Reinet', MAROON, 'c', 12],
    ['FAGT', 'Grahamstown', 'Grahamstown', MAROON, 'c', -45],
    ['FAGY', 'Greytown', 'Greytown', MAROON, 'c', 42],
    ['FAHR', 'Harrismith', 'Harrismith', MAROON, 'c', -45],
    ['FAHS', 'Hoedspruit AB', 'Hoedspruit', NAVY, 'm', 0],
    ['FAJS', 'Johannesburg Intl', 'Johannesburg', NAVY, 'd', 12],
    ['FAKD', 'P.C. Pelser', 'Klerksdorp', NAVY, 'd', -15],
    ['FAKM', 'Kimberley', 'Kimberley', NAVY, 'd', 0],
    ['FAKN', 'Kruger Mpumalanga', 'Kruger Mpumalanga', NAVY, 'd', 35],
    ['FAKR', 'Krugersdorp', 'Krugersdorp', NAVY, 'd', 65],
    ['FAKS', 'Kroonstad', 'Kroonstad', NAVY, 'd', 52],
    ['FAKT', 'Kitty Hawk Aero Estate', 'Boschkop', NAVY, 'd', -5],
    ['FAKU', 'Johan Pienaar', 'Kuruman', MAROON, 'c', 0],
    ['FALA', 'Lanseria', 'Johannesburg', NAVY, 'd', 60]
];

function symbol(color, shape, angle) {
    if (shape === 'm') {
        return `<circle r="6" fill="#fff" stroke="${color}" stroke-width="2"/><circle r="2.500" fill="#fff" stroke="${color}" stroke-width="2"/>`;
    }
    const points = shape === 'd' ? `<path d="M0-8L8 0 0 8-8 0z" fill="${color}"/>` : '';
    return `${points}<circle r="6.500" fill="${color}"/><path d="M0-4.500v9" stroke="#fff" stroke-width="2" transform="rotate(${angle})"/>`;
}

document.getElementById('airportRows').innerHTML = airports.map((a, i) => `
    <tr>
        <th>${i + 1}</th>
        <td class="ident"><div><svg viewBox="-8 -8 16 16">${symbol(a[3], a[4], a[5])}</svg>${a[0]}</div></td>
        <td${a[0] === 'FABE' ? ' class="current"' : ''}>${a[1]}</td>
        <td>${a[2]}</td>
        <td></td>
        <td>South Africa</td>
    </tr>`).join('');

// ident, x, y, label x, colour, shape, angle, add-on
const mapAirports = [
    ['FNCT', 476, 170, 488, GRAY, 'c', 0],
    ['FNKU', 555, 168, 566, GRAY, 'd', 75],
    ['FNHU', 528, 177, 540, MAROON, 'd', -65, true],
    ['FN18', 511, 222, 522, GRAY, 'c', 90],
    ['FNGB', 478, 227, 490, MAROON, 'd', 90, true],
    ['FNME', 573, 220, 584, GRAY, 'd', -50],
    ['FN17', 495, 258, 507, GRAY, 'c', -80],
    ['FYOA', 532, 297, 545, NAVY, 'd', 65, true],
    ['FYRU', 618, 299, 629, GRAY, 'c', 60],
    ['FYGF', 582, 338, 594, NAVY, 'c', 70, true],
    ['FYKA', 530, 394, 542, MAROON, 'c', 60],
    ['FYWH', 567, 409, 578, NAVY, 'd', 60],
    ['FZQA', 795, 149, 807, NAVY, 'd', 60],
    ['FLND', 821, 182, 833, NAVY, 'd', 90],
    ['FLLS', 816, 237, 828, NAVY, 'd', 90],
    ['FWKI', 938, 200, 949, NAVY, 'd', -40],
    ['FQTT', 935, 255, 946, NAVY, 'd', 0],
    ['FVHA', 877, 298, 889, NAVY, 'd', 50, true],
    ['FVWN', 784, 315, 796, NAVY, 'c', 70, true],
    ['FVTL', 848, 335, 860, MAROON, 'm', 0],
    ['FVBU', 820, 349, 833, NAVY, 'c', -60, true],
    ['FAUP', 653, 558, 668, NAVY, 'd', -15],
    ['FACT', 597, 705, 609, NAVY, 'd', 10],
    ['FAOB', 630, 722, 641, NAVY, 'm', 0],
    ['FABE', 790, 677, 803, NAVY, 'c', 60, true]
];

document.getElementById('mapAirports').innerHTML = mapAirports.map(a => `
    <g transform="translate(${a[1]} ${a[2]})">${symbol(a[4], a[5], a[6])}</g>
    <text class="map-ident${a[7] ? ' addon' : ''}" x="${a[3]}" y="${a[2] + 4}" fill="${a[4]}">${a[0]}</text>`).join('');

// Highlight rings of the selected search results
const rings = [
    [741, 296], [757, 302], [784, 315], [877, 298], [820, 349], [794, 376], [702, 348], [662, 390],
    [836, 406], [851, 405], [501, 413], [502, 421], [558, 412], [516, 514], [581, 510], [638, 508],
    [545, 561], [543, 563], [557, 592], [597, 581], [577, 592], [653, 558], [591, 643], [618, 640],
    [578, 679], [595, 692], [611, 686], [593, 705], [622, 703], [597, 706], [611, 698], [635, 708],
    [678, 708], [672, 712], [657, 717], [674, 696], [700, 710], [685, 661], [728, 658], [781, 651],
    [752, 707], [772, 687], [790, 677], [802, 681], [841, 642], [822, 641], [860, 622]
];

document.getElementById('mapRings').innerHTML = rings.map(r => `<use href="#ring" x="${r[0]}" y="${r[1]}"/>`).join('');
```
